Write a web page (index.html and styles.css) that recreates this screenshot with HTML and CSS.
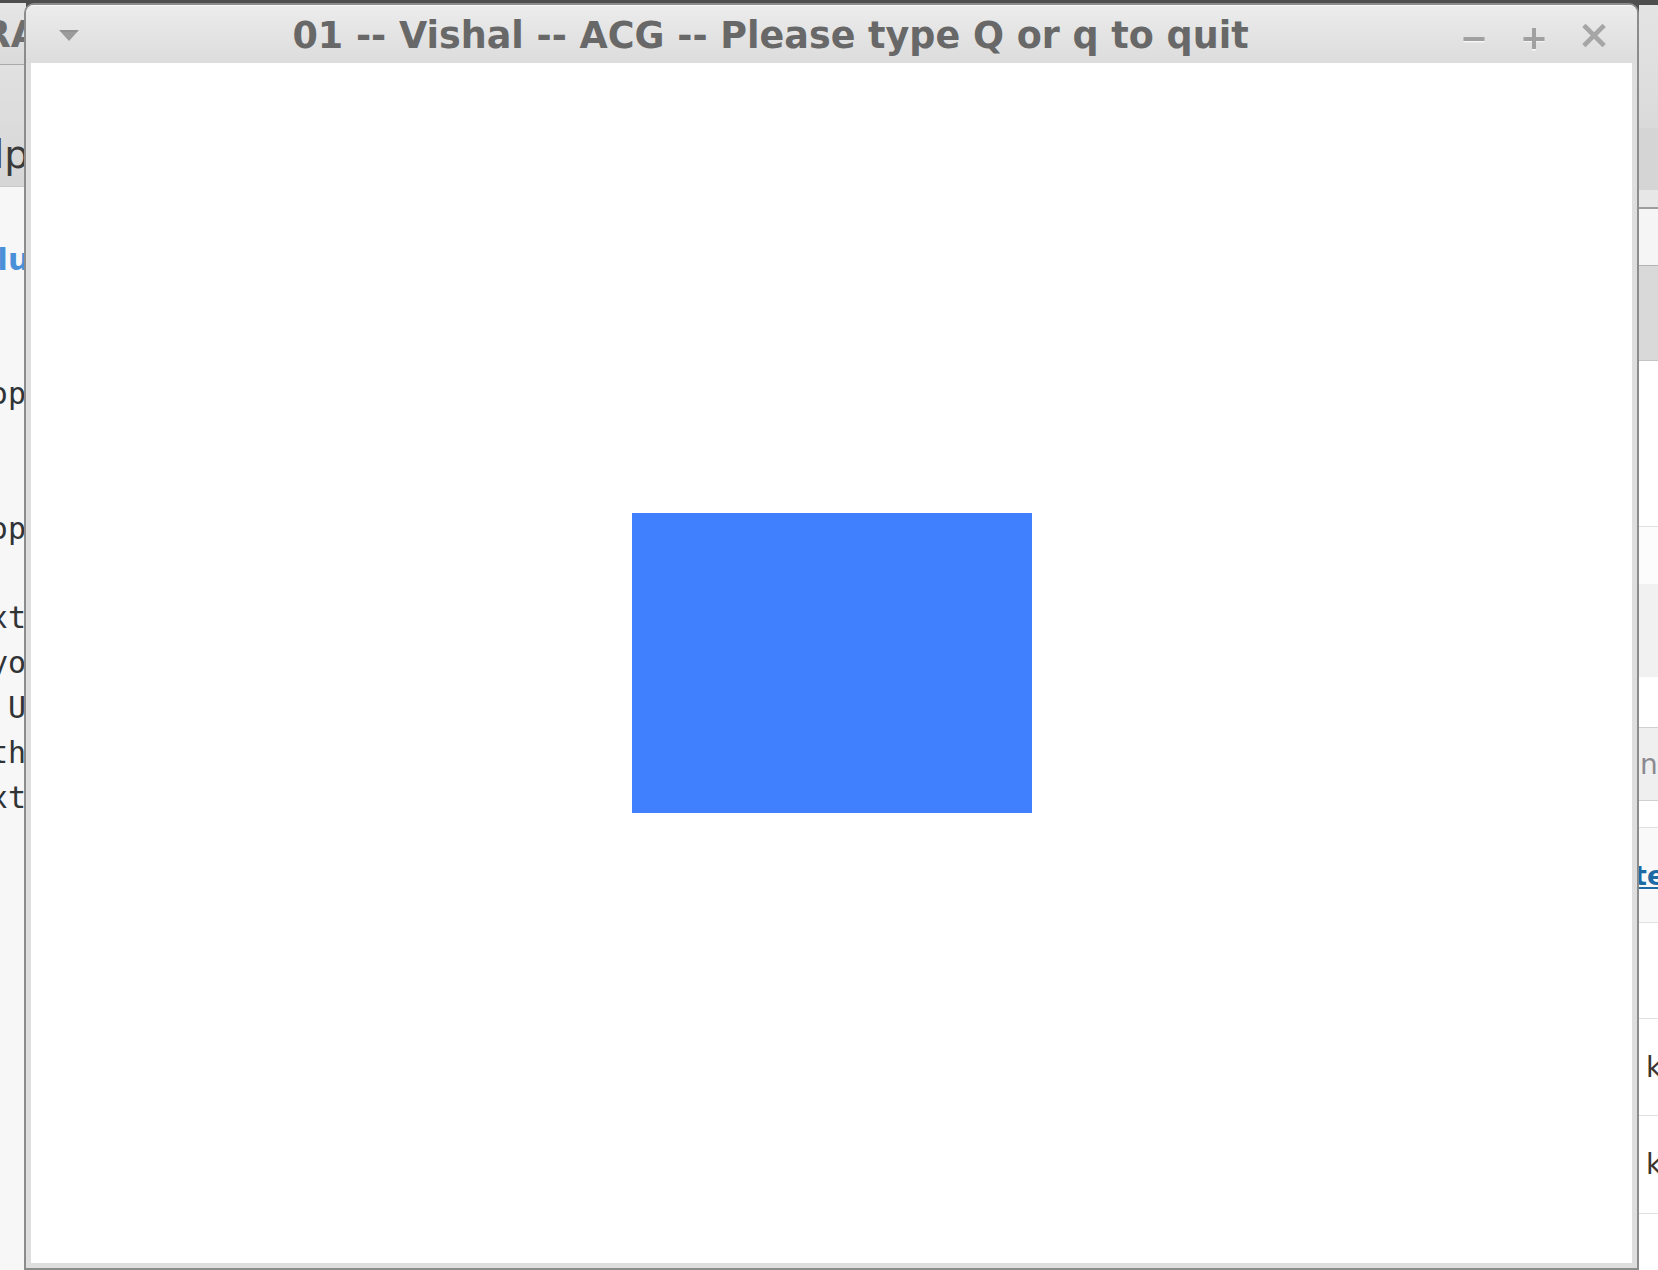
FILE: index.html
```html
<!DOCTYPE html>
<html lang="en">
<head>
<meta charset="utf-8">
<title>01 -- Vishal -- ACG</title>
<link rel="stylesheet" href="styles.css">
</head>
<body>
<div class="desktop">
  <div class="bgwin bg-left">
    <div class="bl-title"><span class="bl-title-text">CAMERA</span></div>
    <div class="bl-menu"><span>Help</span></div>
    <div class="bl-body">
      <div class="bl-link"><span>Solu</span></div>
      <div class="bl-mono bl-op1"><span>Develop</span></div>
      <div class="bl-mono bl-op2"><span>Develop</span></div>
      <div class="bl-mono bl-lines">
        <div class="bl-line"><span>text</span></div>
        <div class="bl-line"><span>yo</span></div>
        <div class="bl-line"><span>U</span></div>
        <div class="bl-line"><span>th</span></div>
        <div class="bl-line"><span>text</span></div>
      </div>
    </div>
  </div>

  <div class="bgwin bg-right">
    <div class="rt-title"></div>
    <div class="rt-tabs"></div>
    <div class="rt-tabs2"></div>
    <div class="rt-toolbar"></div>
    <div class="rt-gray"></div>
    <div class="rt-row rt-h165 rt-line-light"></div>
    <div class="rt-row rt-h57 rt-bg-fc"></div>
    <div class="rt-row rt-h93 rt-bg-f1"></div>
    <div class="rt-row rt-h50 rt-line"></div>
    <div class="rt-row rt-h72 rt-bg-ef rt-line"><span class="rt-n">n</span></div>
    <div class="rt-row rt-h26 rt-line-light"></div>
    <div class="rt-row rt-h94 rt-bg-f9 rt-line-light"><span class="rt-link">te</span></div>
    <div class="rt-row rt-h95 rt-line-light"></div>
    <div class="rt-row rt-h96 rt-line-light"><span class="rt-dot"></span><span class="rt-k">k</span></div>
    <div class="rt-row rt-h97 rt-line-light"><span class="rt-dot"></span><span class="rt-k">k</span></div>
    <div class="rt-rest"></div>
  </div>

  <div class="window">
    <div class="titlebar">
      <svg class="menu-arrow" width="20" height="12" viewBox="0 0 20 12">
        <path d="M0 0 H20 L10 11 Z" fill="#9b9b9b"/>
        <path d="M1.5 1 H18.5" stroke="#8a8a8a" stroke-width="1"/>
      </svg>
      <div class="title">01 -- Vishal -- ACG -- Please type Q or q to quit</div>
      <div class="controls">
        <svg class="ctl" width="60" height="58" viewBox="0 0 60 58">
          <rect x="19.5" y="36" width="21" height="1.5" fill="#f6f6f6"/>
          <rect x="19.5" y="32" width="21" height="4" fill="#a0a0a0"/>
        </svg>
        <svg class="ctl" width="60" height="58" viewBox="0 0 60 58">
          <rect x="28" y="44" width="4" height="1.5" fill="#f6f6f6"/>
          <rect x="19.5" y="36" width="21" height="1.2" fill="#f2f2f2"/>
          <rect x="28" y="23" width="4" height="21" fill="#a0a0a0"/>
          <rect x="19.5" y="32" width="21" height="4" fill="#a0a0a0"/>
        </svg>
        <svg class="ctl" width="60" height="58" viewBox="0 0 60 58">
          <path d="M21.5 22 L38.5 39 M38.5 22 L21.5 39" stroke="#a6a6a6" stroke-width="4.6" stroke-linecap="square"/>
        </svg>
      </div>
    </div>
    <div class="frame">
      <div class="canvas">
        <div class="shape"></div>
      </div>
    </div>
  </div>
</div>
</body>
</html>
```

FILE: styles.css
```css
html, body {
  margin: 0;
  padding: 0;
}

body {
  width: 1658px;
  height: 1270px;
  overflow: hidden;
  background: #4e4e4e;
  font-family: "DejaVu Sans", "Liberation Sans", sans-serif;
}

.desktop {
  position: relative;
  width: 1658px;
  height: 1270px;
}

.bgwin {
  position: absolute;
  overflow: hidden;
  display: flex;
  flex-direction: column;
}

/* ---------- left background window ---------- */
.bg-left {
  left: 0;
  top: 3px;
  width: 26px;
  height: 1267px;
  background: #f7f7f7;
}

.bl-title {
  flex: none;
  height: 62px;
  box-sizing: border-box;
  padding-top: 3px;
  display: flex;
  justify-content: flex-end;
  align-items: center;
  background: linear-gradient(#e6e6e6, #dadada);
  border-bottom: 1px solid #a9a9a9;
  font-weight: bold;
  font-size: 36.5px;
  line-height: 42px;
  color: #6d6d6d;
  white-space: nowrap;
}

.bl-title-text {
  margin-right: -13px;
}

.bl-menu {
  flex: none;
  height: 122px;
  box-sizing: border-box;
  padding-top: 67px;
  display: flex;
  justify-content: flex-end;
  align-items: flex-start;
  background: linear-gradient(#e1e1e1, #d6d6d6);
  border-bottom: 1px solid #c8c8c8;
  font-size: 39px;
  line-height: 45px;
  color: #3a3a3a;
  white-space: nowrap;
}

.bl-menu span {
  margin-right: -3px;
}

.bl-body {
  flex: 1;
  display: flex;
  flex-direction: column;
}

.bl-link {
  margin-top: 54px;
  display: flex;
  justify-content: flex-end;
  font-weight: bold;
  font-size: 31px;
  line-height: 36px;
  color: #4a90d9;
  white-space: nowrap;
}

.bl-link span {
  margin-right: -4px;
}

.bl-mono {
  font-family: "DejaVu Sans Mono", "Liberation Mono", monospace;
  font-size: 30px;
  line-height: 45px;
  color: #303436;
  white-space: nowrap;
}

.bl-op1,
.bl-op2,
.bl-line {
  display: flex;
  justify-content: flex-end;
}

.bl-op1 {
  margin-top: 94px;
}

.bl-op2 {
  margin-top: 90px;
}

.bl-lines {
  margin-top: 44px;
}

/* ---------- right background window ---------- */
.bg-right {
  left: 1639px;
  top: 5px;
  width: 19px;
  height: 1265px;
  background: #ffffff;
}

.rt-title {
  flex: none;
  height: 123px;
  background: linear-gradient(#e4e4e4, #dadada);
}

.rt-tabs {
  flex: none;
  height: 62px;
  background: #d5d5d5;
}

.rt-tabs2 {
  flex: none;
  height: 17px;
  background: #e7e7e7;
  border-bottom: 2px solid #9d9d9d;
}

.rt-toolbar {
  flex: none;
  height: 56px;
  background: #f5f5f5;
  border-bottom: 1px solid #b3b3b3;
}

.rt-gray {
  flex: none;
  height: 94px;
  background: #d9d9d9;
  border-bottom: 1px solid #c4c4c4;
}

.rt-row {
  flex: none;
  display: flex;
  align-items: center;
  white-space: nowrap;
}

.rt-line {
  border-bottom: 1px solid #d0d0d0;
}

.rt-line-light {
  border-bottom: 1px solid #e0e0e0;
}

.rt-h165 { height: 165px; }
.rt-h57 { height: 57px; }
.rt-h93 { height: 93px; }
.rt-h50 { height: 50px; }
.rt-h72 { height: 72px; }
.rt-h26 { height: 26px; }
.rt-h94 { height: 94px; }
.rt-h95 { height: 95px; }
.rt-h96 { height: 96px; }
.rt-h97 { height: 97px; }

.rt-bg-fc { background: #fcfcfc; }
.rt-bg-f1 { background: #f1f1f1; }
.rt-bg-ef { background: #efefef; }
.rt-bg-f9 { background: #f9f9f9; }

.rt-rest {
  flex: 1;
  background: #ffffff;
}

.rt-n {
  margin-left: 1px;
  font-size: 28px;
  color: #8a8a90;
}

.rt-link {
  margin-left: -5px;
  font-weight: bold;
  font-size: 27px;
  color: #1d6aa5;
  text-decoration: underline;
}

.rt-dot {
  width: 6px;
  height: 6px;
  margin-left: -2px;
  border-radius: 50%;
  background: #6cb3e8;
}

.rt-k {
  margin-left: 9px;
  font-size: 28px;
  color: #3e3430;
}

/* ---------- foreground window ---------- */
.window {
  position: absolute;
  left: 24px;
  top: 3px;
  width: 1615px;
  height: 1267px;
  box-sizing: border-box;
  border: 2px solid #8c8c8c;
  border-radius: 10px 10px 0 0;
  background: #dedede;
  display: flex;
  flex-direction: column;
  overflow: hidden;
}

.titlebar {
  flex: none;
  height: 58px;
  display: flex;
  align-items: center;
  padding-left: 33px;
  padding-right: 13.5px;
  background: linear-gradient(#ececec, #dcdcdc);
  box-shadow: inset 0 1px 0 #f8f8f8;
}

.menu-arrow {
  flex: none;
  margin-top: 4px;
  margin-right: 18.5px;
}

.title {
  flex: 1;
  min-width: 0;
  padding-top: 3px;
  text-align: center;
  font-weight: bold;
  font-size: 36.5px;
  line-height: 42px;
  color: #686868;
  white-space: nowrap;
}

.controls {
  flex: none;
  align-self: stretch;
  display: flex;
}

.ctl {
  display: block;
}

.frame {
  flex: 1;
  display: flex;
  padding: 0 5px 5px 5px;
  background: #dedede;
}

.canvas {
  flex: 1;
  background: #ffffff;
  display: flex;
  align-items: center;
  justify-content: center;
}

.shape {
  width: 400px;
  height: 300px;
  background: #4080ff;
}
```
